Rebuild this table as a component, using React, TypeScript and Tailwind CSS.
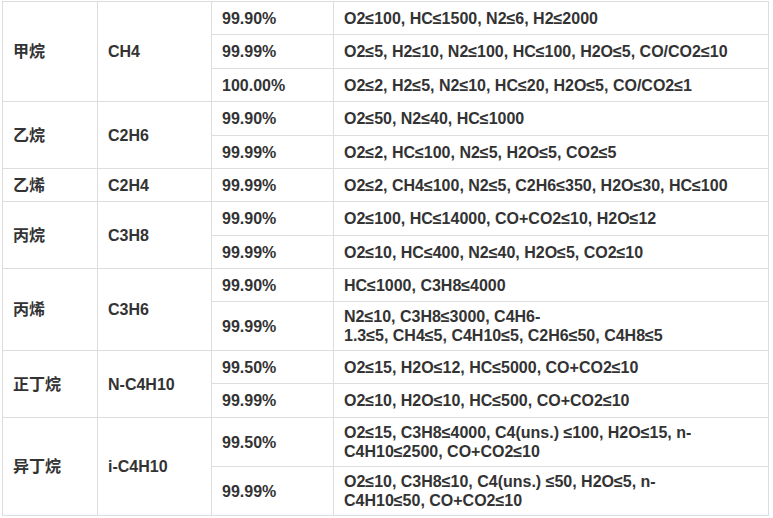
type Row = { purity: string; spec: React.ReactNode; h: string };
type Group = { name: string; code: string; rows: Row[] };

const groups: Group[] = [
  {
    name: '甲烷',
    code: 'CH4',
    rows: [
      { purity: '99.90%', spec: 'O2≤100, HC≤1500, N2≤6, H2≤2000', h: 'h-[33px]' },
      { purity: '99.99%', spec: 'O2≤5, H2≤10, N2≤100, HC≤100, H2O≤5, CO/CO2≤10', h: 'h-[34px]' },
      { purity: '100.00%', spec: 'O2≤2, H2≤5, N2≤10, HC≤20, H2O≤5, CO/CO2≤1', h: 'h-[33px]' },
    ],
  },
  {
    name: '乙烷',
    code: 'C2H6',
    rows: [
      { purity: '99.90%', spec: 'O2≤50, N2≤40, HC≤1000', h: 'h-[34px]' },
      { purity: '99.99%', spec: 'O2≤2, HC≤100, N2≤5, H2O≤5, CO2≤5', h: 'h-[33px]' },
    ],
  },
  {
    name: '乙烯',
    code: 'C2H4',
    rows: [{ purity: '99.99%', spec: 'O2≤2, CH4≤100, N2≤5, C2H6≤350, H2O≤30, HC≤100', h: 'h-[33px]' }],
  },
  {
    name: '丙烷',
    code: 'C3H8',
    rows: [
      { purity: '99.90%', spec: 'O2≤100, HC≤14000, CO+CO2≤10, H2O≤12', h: 'h-[34px]' },
      { purity: '99.99%', spec: 'O2≤10, HC≤400, N2≤40, H2O≤5, CO2≤10', h: 'h-[33px]' },
    ],
  },
  {
    name: '丙烯',
    code: 'C3H6',
    rows: [
      { purity: '99.90%', spec: 'HC≤1000, C3H8≤4000', h: 'h-[33px]' },
      {
        purity: '99.99%',
        spec: (
          <>
            N2≤10, C3H8≤3000, C4H6-
            <br />
            1.3≤5, CH4≤5, C4H10≤5, C2H6≤50, C4H8≤5
          </>
        ),
        h: 'h-[49px]',
      },
    ],
  },
  {
    name: '正丁烷',
    code: 'N-C4H10',
    rows: [
      { purity: '99.50%', spec: 'O2≤15, H2O≤12, HC≤5000, CO+CO2≤10', h: 'h-[33px]' },
      { purity: '99.99%', spec: 'O2≤10, H2O≤10, HC≤500, CO+CO2≤10', h: 'h-[34px]' },
    ],
  },
  {
    name: '异丁烷',
    code: 'i-C4H10',
    rows: [
      {
        purity: '99.50%',
        spec: (
          <>
            O2≤15, C3H8≤4000, C4(uns.) ≤100, H2O≤15, n-
            <br />
            C4H10≤2500, CO+CO2≤10
          </>
        ),
        h: 'h-[49px]',
      },
      {
        purity: '99.99%',
        spec: (
          <>
            O2≤10, C3H8≤10, C4(uns.) ≤50, H2O≤5, n-
            <br />
            C4H10≤50, CO+CO2≤10
          </>
        ),
        h: 'h-[49px]',
      },
    ],
  },
];

const cell = 'border border-[#dddddd] px-[10px] py-0 align-middle';

export default function App() {
  return (
    <div className="min-h-screen bg-white pl-[2px] pt-px font-['Liberation_Sans',Arial,'Noto_Sans_CJK_SC',sans-serif] text-[16px] font-bold leading-[19px] text-[#333333]">
      <table className="w-[766px] table-fixed border-collapse">
        <colgroup>
          <col className="w-[95px]" />
          <col className="w-[114px]" />
          <col className="w-[122px]" />
          <col className="w-[435px]" />
        </colgroup>
        <tbody>
          {groups.map((g) =>
            g.rows.map((r, i) => (
              <tr key={g.name + i} className={r.h}>
                {i === 0 && (
                  <>
                    <td rowSpan={g.rows.length} className={cell}>
                      {g.name}
                    </td>
                    <td rowSpan={g.rows.length} className={cell}>
                      {g.code}
                    </td>
                  </>
                )}
                <td className={cell}>{r.purity}</td>
                <td className={cell}>{r.spec}</td>
              </tr>
            ))
          )}
        </tbody>
      </table>
    </div>
  );
}
